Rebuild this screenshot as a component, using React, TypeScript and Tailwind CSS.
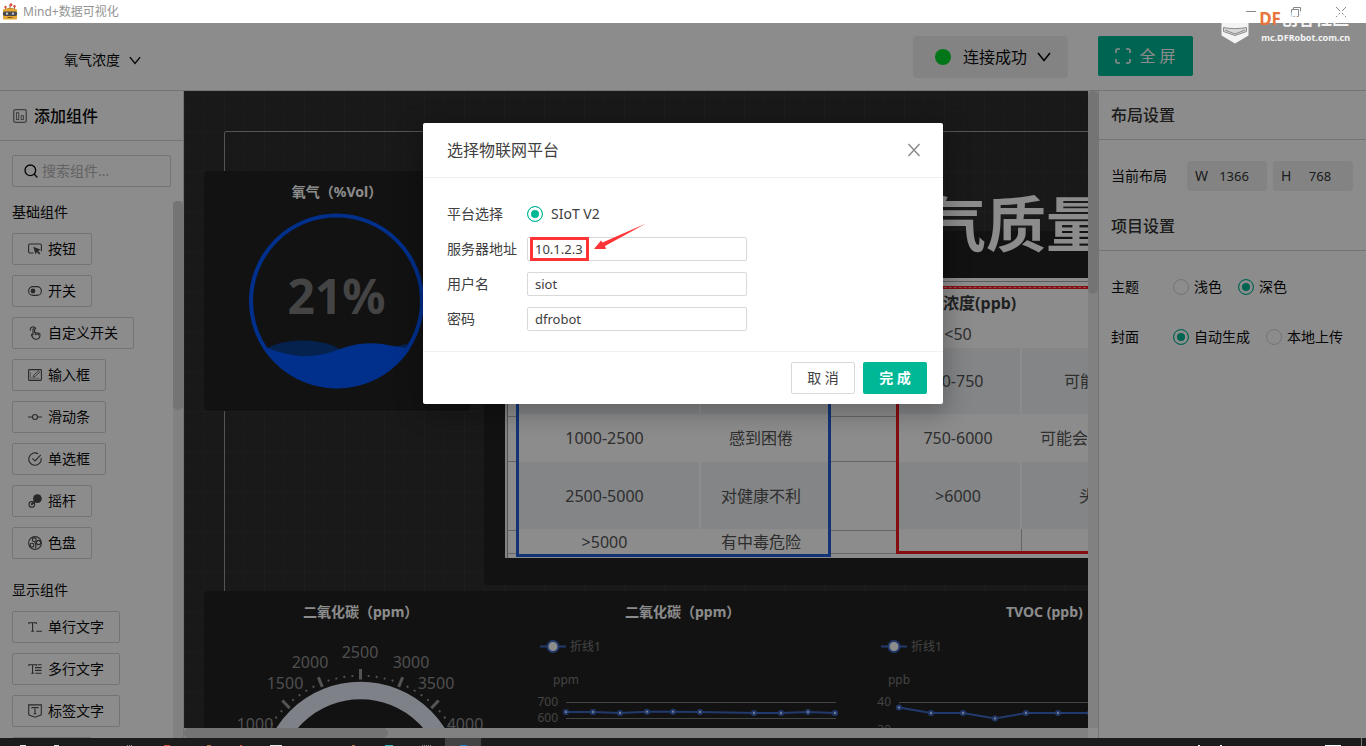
import type { ReactNode } from "react";
import { Search } from "lucide-react";

interface Widget {
  name: string;
  icon: ReactNode;
}

const basicWidgets: Widget[] = [
  {
    name: "按钮",
    icon: (
      <>
        <path d="M5.500 11H1.800a1.200 1.200 0 0 1-1.200-1.200V3.200A1.200 1.200 0 0 1 1.800 2h10.400a1.200 1.200 0 0 1 1.200 1.200v6" />
        <path d="M5.300 4.800l7.600 2.900-2.800 1.300 2.400 2.400-1.400 1.200-2.300-2.500-1.300 2.400z" fill="currentColor" stroke="none" />
      </>
    ),
  },
  {
    name: "开关",
    icon: (
      <>
        <rect x="0.600" y="2.600" width="12.800" height="8.800" rx="4.400" />
        <circle cx="5" cy="7" r="2.400" fill="currentColor" stroke="none" />
      </>
    ),
  },
  {
    name: "自定义开关",
    icon: (
      <>
        <path d="M2.400 4.600A2.800 2.800 0 1 1 7.800 3.200" />
        <path d="M5 9.200V3.600a.8.8 0 0 1 1.600 0V6.600l4.200.6c.8.1 1.200.6 1.200 1.400 0 1.700-.3 4.600-3.200 4.600H7.600C5.800 13.200 4.600 11.600 3.400 9.200c-.3-.8.9-1.300 1.600 0z" />
        <path d="M7.400 7v2M9 7.200v2M10.500 7.300v2" />
      </>
    ),
  },
  {
    name: "输入框",
    icon: (
      <>
        <rect x="0.600" y="1.600" width="12.800" height="10.800" rx="0.800" />
        <path d="M5.200 9l.4-1.800 4.800-4.200 1.200 1.400-4.800 4.200z" strokeWidth="0.8" />
        <path d="M2.400 4v6.200h9" strokeWidth="0.7" opacity="0.7" />
      </>
    ),
  },
  {
    name: "滑动条",
    icon: (
      <>
        <circle cx="7" cy="7" r="2.500" />
        <path d="M0 7h4.500M9.500 7H14" />
      </>
    ),
  },
  {
    name: "单选框",
    icon: (
      <>
        <path d="M10.200 1.800A6.200 6.200 0 1 0 13.100 6" />
        <path d="M4.400 6.400L7 8.900l5.800-6" />
      </>
    ),
  },
  {
    name: "摇杆",
    icon: (
      <>
        <circle cx="9.400" cy="4.600" r="4.400" fill="currentColor" stroke="none" />
        <circle cx="3.800" cy="10.400" r="2.800" />
        <path d="M3.200 10.800L7 7.500" strokeWidth="1.800" />
      </>
    ),
  },
  {
    name: "色盘",
    icon: (
      <>
        <circle cx="7" cy="7" r="6.400" />
        <circle cx="6.200" cy="3.800" r="1.900" />
        <circle cx="10.500" cy="6.500" r="2.100" />
        <circle cx="4" cy="9.200" r="1.900" />
        <path d="M6.800 6.400c1.200 1.400 1.400 3.600.8 6" />
      </>
    ),
  },
];

const displayWidgets: Widget[] = [
  {
    name: "单行文字",
    icon: <path d="M.8 4V2.800h7.600V4M4.600 2.800v8.400M3.200 11.200h2.800M8.200 11.200H14" />,
  },
  {
    name: "多行文字",
    icon: <path d="M.8 4V2.800h7.600V4M4.600 2.800v8.400M3.200 11.200h2.800M9.600 2.800H13.600M7 5.600h6.600M7 8.400h6.600M7.200 11.200h6.400" />,
  },
  {
    name: "标签文字",
    icon: (
      <>
        <path d="M.7.9h12.600v9.300c0 .6-.3.900-.9 1.100L7 13.200l-5.400-1.900c-.6-.2-.9-.5-.9-1.100z" />
        <path d="M4 4.600V3.500h6v1.100M7 3.500v6.300M5.600 9.800h2.800" />
      </>
    ),
  },
  {
    name: "图片",
    icon: <rect x="0.600" y="1.600" width="12.800" height="10.800" rx="1" />,
  },
];

const gaugeLabels = [
  { text: "1000", x: 51, y: 139 },
  { text: "1500", x: 81, y: 98 },
  { text: "2000", x: 106, y: 77 },
  { text: "2500", x: 156, y: 67 },
  { text: "3000", x: 207, y: 77 },
  { text: "3500", x: 232, y: 98 },
  { text: "4000", x: 261, y: 139 },
];

function Chevron({ className }: { className: string }) {
  return (
    <svg viewBox="0 0 14 10" className={className} fill="none" stroke="currentColor" strokeWidth="1.600">
      <path d="M1 1l6 7.500L13 1" />
    </svg>
  );
}

function WidgetSection({ title, widgets }: { title: string; widgets: Widget[] }) {
  return (
    <section className="flex flex-col items-start gap-2.5 mb-5">
      <h3 className="text-sm leading-[22px]">{title}</h3>
      {widgets.map((widget) => (
        <button
          key={widget.name}
          className="h-8 shrink-0 px-[15px] flex items-center gap-1.5 border border-[#d4d4d4] rounded-xs text-sm cursor-pointer"
        >
          <svg viewBox="0 0 14 14" className="w-3.5 h-3.5 text-[#4a4a4a]" fill="none" stroke="currentColor" strokeWidth="1.100">
            {widget.icon}
          </svg>
          {widget.name}
        </button>
      ))}
    </section>
  );
}

function Radio({ name, label, checked = false, gap = "gap-[5px]" }: { name: string; label: string; checked?: boolean; gap?: string }) {
  return (
    <label className={`flex items-center text-sm ${gap}`}>
      <input
        type="radio"
        name={name}
        defaultChecked={checked}
        className="appearance-none w-4 h-4 rounded-full border border-[#d4d4d4] bg-white checked:border-[#00b796] checked:bg-[#00b796] checked:shadow-[inset_0_0_0_3px_white]"
      />
      {label}
    </label>
  );
}

function TitleBar() {
  return (
    <div className="h-[23px] shrink-0 flex items-center justify-between pl-0.5 pr-5 bg-white text-xs text-[#949494]">
      <div className="flex items-center gap-[5px]">
        <svg viewBox="0 0 16 17" className="w-4 h-[17px]">
          <path d="M3.500 7V3.500M8 7V2M12.500 7V3.500" stroke="#8a5a33" />
          <circle cx="3.500" cy="4" r="1.200" fill="#d9503f" />
          <circle cx="9" cy="1.800" r="1.500" fill="#d9503f" />
          <circle cx="12.500" cy="3.200" r="1.200" fill="#d9503f" />
          <path d="M2 6.500c2-2 10-2 12 0z" fill="#c98a2b" />
          <rect x="1" y="6" width="14" height="10.500" rx="1" fill="#e5a733" />
          <rect x="0.800" y="8.500" width="14.400" height="4.500" rx="2" fill="#4a4a50" />
          <circle cx="5" cy="10.700" r="1.100" fill="#c9d3dc" />
          <circle cx="11" cy="10.700" r="1.100" fill="#c9d3dc" />
          <path d="M5.500 14.500h5" stroke="#7a5415" />
        </svg>
        <span>Mind+数据可视化</span>
      </div>
      <div className="flex items-center gap-[35px] text-[#888]">
        <button aria-label="最小化">
          <svg viewBox="0 0 10 10" className="w-2.5 h-2.5" stroke="currentColor"><path d="M0 4.500h10" /></svg>
        </button>
        <button aria-label="还原">
          <svg viewBox="0 0 10 10" className="w-2.5 h-2.5" fill="none" stroke="currentColor">
            <path d="M.5 2.500h7v7h-7zM2.500 2.500v-2h7v7h-2" />
          </svg>
        </button>
        <button aria-label="关闭">
          <svg viewBox="0 0 10 10" className="w-2.5 h-2.5" stroke="currentColor"><path d="M0 0l10 10M10 0L0 10" /></svg>
        </button>
      </div>
    </div>
  );
}

function Header() {
  return (
    <header className="h-[68px] shrink-0 flex items-start justify-between pt-[13px] pl-16 pr-[173px] border-b border-[#d4d4d4]">
      <button className="h-12 flex items-center gap-[9px] text-sm">
        氧气浓度
        <Chevron className="w-3 h-[9px]" />
      </button>
      <div className="flex items-start gap-[30px]">
        <button className="h-[42px] w-[155px] flex items-center pl-[22px] rounded bg-[#efefef] text-base">
          <span className="w-4 h-4 mr-3 rounded-full bg-[#00d72f]" />
          连接成功
          <Chevron className="w-3.5 h-2.5 ml-2.5" />
        </button>
        <button className="h-10 w-[95px] flex items-center justify-center gap-2 rounded-xs bg-[#00b796] text-white text-base">
          <svg viewBox="0 0 16 16" className="w-4 h-4" fill="none" stroke="currentColor" strokeWidth="1.600">
            <path d="M1 5V2.500A1.500 1.500 0 0 1 2.500 1H5M11 1h2.500A1.500 1.500 0 0 1 15 2.500V5M15 11v2.500a1.500 1.500 0 0 1-1.500 1.500H11M5 15H2.500A1.500 1.500 0 0 1 1 13.500V11" />
          </svg>
          全 屏
        </button>
      </div>
    </header>
  );
}

function Sidebar() {
  return (
    <aside className="w-[184px] shrink-0 flex flex-col border-r border-[#d4d4d4]">
      <h2 className="h-[50px] shrink-0 flex items-center gap-[7px] px-[13px] border-b border-[#d4d4d4] text-base font-medium">
        <svg viewBox="0 0 14 14" className="w-3.5 h-3.5 text-[#777]" fill="none" stroke="currentColor" strokeWidth="1.300">
          <rect x="0.700" y="0.700" width="12.600" height="12.600" rx="1.500" />
          <rect x="3.500" y="3.700" width="2.200" height="6.800" strokeWidth="1" />
          <rect x="8.200" y="6.700" width="2.200" height="3.800" strokeWidth="1" />
        </svg>
        添加组件
      </h2>
      <div className="h-8 shrink-0 mx-3 my-3.5 flex items-center gap-[3px] pl-2.5 border border-[#d4d4d4] rounded-xs">
        <Search className="w-4 h-4 shrink-0" strokeWidth={2} />
        <input aria-label="搜索组件" placeholder="搜索组件..." className="w-0 flex-1 text-sm bg-transparent outline-none placeholder:text-[#b5b5b5]" />
      </div>
      <div className="flex-1 min-h-0 flex">
        <div className="flex-1 min-w-0 pl-3 overflow-hidden">
          <WidgetSection title="基础组件" widgets={basicWidgets} />
          <WidgetSection title="显示组件" widgets={displayWidgets} />
        </div>
        <div className="w-2.5 bg-[#ebebeb]">
          <div className="h-[209px] rounded-full bg-[#d3d3d3]" />
        </div>
      </div>
    </aside>
  );
}

function LiquidCard() {
  return (
    <div className="absolute left-5 top-20 w-[266px] h-60 rounded bg-[#222]">
      <h4 className="pt-2.5 text-center text-sm leading-[22px] font-bold text-white">氧气（%Vol）</h4>
      <svg viewBox="0 0 266 200" className="w-full">
        <circle cx="132.500" cy="98" r="85.500" fill="none" stroke="#0057ff" strokeWidth="4" />
        <path
          d="M64 144.500C76 138.500 96 136 112 138.500S130 143 136 146.500C158 150 188 145 204 140.500L202 146A85 85 0 0 1 64 147z"
          fill="#0a3c8c"
        />
        <path
          d="M61 144.500C78 150 92 154 106 153C122 152 132 147 144 143.500C158 139.500 172 139.500 186 142.500L206 145.500A85.500 85.500 0 0 1 61 144.500z"
          fill="#0057ff"
        />
        <text x="132.500" y="111" textAnchor="middle" className="text-5xl font-bold" fill="#7c7c7c">21%</text>
      </svg>
    </div>
  );
}

// co2 cells of the first rows stay blank
const airRows = [
  { h: "h-[29px]", bg: "", co2: "", co2Effect: "", tvoc: "<50", tvocEffect: "", pad: "" },
  { h: "h-[66px]", bg: "bg-[#eff2f5]", co2: "", co2Effect: "", tvoc: "50-750", tvocEffect: "可能", pad: "pl-[42px]" },
  { h: "h-[48px]", bg: "", co2: "1000-2500", co2Effect: "感到困倦", tvoc: "750-6000", tvocEffect: "可能会", pad: "pl-[18px]" },
  { h: "h-[67px]", bg: "bg-[#eff2f5]", co2: "2500-5000", co2Effect: "对健康不利", tvoc: ">6000", tvocEffect: "头", pad: "pl-[57px]" },
  { h: "h-[25px]", bg: "", co2: ">5000", co2Effect: "有中毒危险", tvoc: "", tvocEffect: "", pad: "" },
];

function AirQualityCard() {
  return (
    <>
      <div className="absolute left-[300px] top-[140px] w-[800px] h-[354px] rounded bg-[#222]">
        <div className="absolute left-[21px] top-[47px] w-[760px] h-[280px] overflow-hidden bg-white text-base leading-5 text-[#555] border-l-2 border-[#eee]">
          <div className="absolute inset-x-0 top-[3px] h-px bg-[#aaa]" />
          <div className="absolute inset-x-0 top-[138px] h-px bg-[#bbb]" />
          <div className="absolute inset-x-0 top-[183px] h-px bg-[#bbb]" />
          <div className="absolute inset-x-0 top-[252px] h-px bg-[#bbb]" />
          <div className="absolute inset-x-0 top-[275px] h-px bg-[#bbb]" />
          <div className="absolute inset-y-0 left-0 w-px bg-[#999]" />
          <table className="absolute left-[9px] top-2 w-[315px] table-fixed border-collapse bg-white outline-[3px] -outline-offset-[3px] outline-[#2160d8]">
            <tbody>
              <tr className="h-[33px]"><td className="w-[184px]" /><td /></tr>
              {airRows.map((row) => (
                <tr key={row.tvoc} className={`${row.h} ${row.bg}`}>
                  <td className="p-0 pl-2 pr-3.5 text-center border-r-2 border-white">{row.co2}</td>
                  <td className="p-0 pr-2.5 text-center">{row.co2Effect}</td>
                </tr>
              ))}
              <tr className="h-[3px]"><td className="p-0" /><td className="p-0" /></tr>
            </tbody>
          </table>
          <table className="absolute left-[389px] top-2 w-[400px] table-fixed border-collapse bg-white outline-[3px] -outline-offset-[3px] outline-[#f5181c]">
            <thead>
              <tr className="h-[33px]">
                <th className="w-[125px] p-0 text-center font-bold whitespace-nowrap text-[#3c3c3c]">TVOC浓度(ppb)</th>
                <th />
              </tr>
            </thead>
            <tbody>
              {airRows.map((row) => (
                <tr key={row.tvoc} className={`${row.h} ${row.bg}`}>
                  <td className={`p-0 text-center ${row.tvoc ? "border-r-2 border-white" : "border-r border-[#bbb]"}`}>{row.tvoc}</td>
                  <td className={`p-0 text-left whitespace-nowrap ${row.pad}`}>{row.tvocEffect}</td>
                </tr>
              ))}
            </tbody>
          </table>
          <div className="absolute left-[392px] right-0 top-[9px] border-t border-dashed border-white/50" />
        </div>
      </div>
      <h1 className="absolute left-[742px] top-[98px] text-6xl leading-[70px] font-bold whitespace-nowrap text-white">气质量</h1>
    </>
  );
}

function GaugeChart() {
  const ticks = Array.from({ length: 31 }, (_, i) => i - 15);
  return (
    <svg viewBox="0 0 320 146" className="absolute left-0 top-0 w-80 h-[146px]">
      <circle cx="156.500" cy="190.500" r="91" fill="none" stroke="#e6ebf8" strokeWidth="17.500" />
      {ticks.map((t) =>
        t % 5 === 0 ? (
          <path key={t} d="M156.500 78v10.500" stroke="#999" strokeWidth="3" transform={`rotate(${t * 4.4} 156.500 190.500)`} />
        ) : (
          <circle key={t} cx="156.500" cy="84.700" r="1.100" fill="#999" transform={`rotate(${t * 4.4} 156.500 190.500)`} />
        )
      )}
      {gaugeLabels.map((l) => (
        <text key={l.text} x={l.x} y={l.y} textAnchor="middle" className="text-base" fill="#8f8f8f">{l.text}</text>
      ))}
    </svg>
  );
}

interface LineChartProps {
  unit: string;
  originX: number;
  width: number;
  yLabels: { text: string; y: number }[];
  points: number[][];
}

function LineChart({ unit, originX, width, yLabels, points }: LineChartProps) {
  return (
    <svg viewBox="0 0 320 110" className="w-80 h-[110px] overflow-visible text-xs" fill="#7c7c7c">
      <path d="M0 19.500h26" stroke="#3f68c8" strokeWidth="2" />
      <circle cx="13" cy="19.500" r="5.500" fill="#fff" stroke="#3f68c8" strokeWidth="2" />
      <text x="30" y="24">折线1</text>
      <text x={originX} y="57" textAnchor="middle">{unit}</text>
      {yLabels.map((l) => (
        <g key={l.text}>
          <text x={originX - 8} y={l.y + 3} textAnchor="end">{l.text}</text>
          <path d={`M${originX} ${l.y}h${width}`} stroke="#7c7c7c" />
        </g>
      ))}
      <polyline points={points.map((p) => p.join(",")).join(" ")} fill="none" stroke="#3f68c8" strokeWidth="2" />
      {points.map(([x, y]) => (
        <circle key={x} cx={x} cy={y} r="2" fill="#fff" stroke="#3f68c8" strokeWidth="2" />
      ))}
    </svg>
  );
}

function Canvas() {
  return (
    <main className="flex-1 min-w-0 flex flex-col">
      <div className="flex-1 min-h-0 flex">
        <div className="relative flex-1 min-w-0 overflow-hidden bg-[#2e2e2e] bg-[linear-gradient(#363636_1px,transparent_1px),linear-gradient(90deg,#363636_1px,transparent_1px),linear-gradient(#323232_1px,transparent_1px),linear-gradient(90deg,#323232_1px,transparent_1px)] bg-[size:40px_40px,40px_40px,20px_20px,20px_20px]">
          <div className="absolute left-10 top-10 w-[1366px] h-[768px] rounded-xs border border-[#999]" />
          <LiquidCard />
          <AirQualityCard />
          <div className="absolute left-5 right-0 top-[500px] h-60 rounded-l bg-[#222]">
            <GaugeChart />
            <h4 className="absolute left-[99px] top-2.5 text-sm leading-[22px] font-bold text-white">二氧化碳（ppm）</h4>
            <h4 className="absolute left-[421px] top-2.5 text-sm leading-[22px] font-bold text-white">二氧化碳（ppm）</h4>
            <h4 className="absolute left-[802px] top-2.5 text-sm leading-[22px] font-bold whitespace-nowrap text-white">TVOC (ppb)</h4>
            <div className="absolute left-[336px] top-9">
              <LineChart
                unit="ppm"
                originX={26}
                width={270}
                yLabels={[{ text: "700", y: 75.5 }, { text: "600", y: 91.5 }]}
                points={[[26, 85], [53, 85], [80, 86], [107, 84.7], [133, 84.7], [160, 85], [214, 86], [241, 86], [268, 85], [295, 86]]}
              />
            </div>
            <div className="absolute left-[677px] top-9">
              <LineChart
                unit="ppb"
                originX={18}
                width={290}
                yLabels={[{ text: "40", y: 75.5 }, { text: "30", y: 103.5 }]}
                points={[[18, 80.5], [50, 86], [82, 86], [114, 91.5], [145, 86], [177, 86], [209, 86]]}
              />
            </div>
          </div>
        </div>
        <div className="w-2.5 bg-[#ebebeb]">
          <div className="h-[203px] rounded-full bg-[#d3d3d3]" />
        </div>
      </div>
      <div className="h-2.5 shrink-0 mr-2.5 bg-[#ebebeb]">
        <div className="w-[204px] h-full rounded-full bg-[#d3d3d3]" />
      </div>
    </main>
  );
}

function SizeField({ label, value }: { label: string; value: string }) {
  return (
    <label className="w-20 h-[30px] flex items-center pl-2 rounded bg-[#efefef] text-sm text-[#333]">
      <span className="w-4">{label}</span>
      <input defaultValue={value} className="w-[46px] bg-transparent text-center text-[13px] outline-none" />
    </label>
  );
}

function SettingsPanel() {
  return (
    <aside className="w-[268px] shrink-0 border-l border-[#d4d4d4]">
      <h2 className="h-[49px] px-3 flex items-center border-b border-[#d4d4d4] text-base font-medium text-[#333]">布局设置</h2>
      <div className="flex items-center px-3 pt-[21px] pb-[11px]">
        <span className="w-[76px] text-sm">当前布局</span>
        <div className="flex gap-1.5">
          <SizeField label="W" value="1366" />
          <SizeField label="H" value="768" />
        </div>
      </div>
      <h2 className="h-[49px] px-3 flex items-center border-b border-[#d4d4d4] text-base font-medium text-[#333]">项目设置</h2>
      <div className="pt-[11px] pl-3">
        <div className="h-[50px] flex items-center gap-4">
          <span className="w-[46px] text-sm">主题</span>
          <Radio name="theme" label="浅色" />
          <Radio name="theme" label="深色" checked />
        </div>
        <div className="h-[50px] flex items-center gap-4">
          <span className="w-[46px] text-sm">封面</span>
          <Radio name="cover" label="自动生成" checked />
          <Radio name="cover" label="本地上传" />
        </div>
      </div>
    </aside>
  );
}

function FormRow({ id, label, value }: { id: string; label: string; value: string }) {
  return (
    <div className="relative h-6 flex items-center">
      <label htmlFor={id} className="w-20">{label}</label>
      <input id={id} defaultValue={value} className="w-[220px] h-6 px-[7px] text-[13px] border border-[#d9d9d9] rounded-xs outline-none" />
      {id === "server" && (
        <>
          <span className="absolute left-[83px] top-0 w-[59px] h-6 border-3 border-[#ff3436]" />
          <svg viewBox="0 0 54 28" className="absolute left-[146px] -top-3.5 w-[54px] h-7">
            <path d="M1 26L8 17.500L9.500 19.500L53 0.500L12 23L13 26z" fill="#ff3436" />
          </svg>
        </>
      )}
    </div>
  );
}

function PlatformDialog() {
  return (
    <div
      role="dialog"
      aria-label="选择物联网平台"
      className="w-[520px] h-fit mt-[100px] rounded-xs bg-white text-sm text-[#404040] shadow-[0_6px_24px_4px_rgba(0,0,0,0.25)]"
    >
      <div className="h-[55px] px-6 flex items-center justify-between border-b border-[#f0f0f0]">
        <h2 className="text-base">选择物联网平台</h2>
        <button aria-label="关闭" className="-mr-1 p-0.5 text-[#888]">
          <svg viewBox="0 0 14 14" className="w-3.5 h-3.5" fill="none" stroke="currentColor" strokeWidth="1.400">
            <path d="M1.500 1l11 12M12.500 1l-11 12" />
          </svg>
        </button>
      </div>
      <form className="px-6 pt-6 pb-5 flex flex-col gap-[11px]">
        <div className="h-6 flex items-center">
          <span className="w-20">平台选择</span>
          <Radio name="platform" label="SIoT V2" checked gap="gap-2" />
        </div>
        <FormRow id="server" label="服务器地址" value="10.1.2.3" />
        <FormRow id="user" label="用户名" value="siot" />
        <FormRow id="password" label="密码" value="dfrobot" />
      </form>
      <div className="px-4 py-2.5 flex justify-end gap-2 border-t border-[#f0f0f0]">
        <button className="w-16 h-8 border border-[#d9d9d9] rounded-xs">取 消</button>
        <button className="w-16 h-8 rounded-xs bg-[#00b796] font-bold text-white">完 成</button>
      </div>
    </div>
  );
}

function Watermark() {
  return (
    <div className="absolute right-4 top-2.5 flex items-start gap-2.5 text-white/90">
      <svg viewBox="0 0 28 34" className="w-7 h-[34px]">
        <path d="M.5 4h27v21.500L14 33.500.5 25.500z" fill="#fff" opacity="0.900" />
        <path d="M2.500 17.500c7 1.500 16 1.500 23 0v4L14 25.500 2.500 21.500z" fill="#d8d8d8" stroke="#8c8c8c" />
        <path d="M4 20l10 4 10-4" fill="none" stroke="#8c8c8c" />
      </svg>
      <div>
        <p className="text-[17px] leading-[18px] font-bold whitespace-nowrap">
          <span className="text-[#e8743b]">DF</span>创客社区
        </p>
        <p className="pt-1 pl-0.5 text-[9px] leading-3 font-bold">mc.DFRobot.com.cn</p>
      </div>
    </div>
  );
}

function Taskbar() {
  return (
    <footer className="h-2 shrink-0 flex justify-between bg-[#1c1c1c]">
      <svg viewBox="0 0 490 8" className="w-[490px] h-2">
        <rect x="445" width="36" height="8" fill="#434343" />
        <path d="M20 7.500h6M54 7.500h5M270 7.500h12" stroke="#e5e5e5" />
        <path d="M127 7.500h6M422 7.500h10" stroke="#888" strokeDasharray="1 1" />
        <path d="M164 7.500h6M240 7.500h2" stroke="#d9503f" />
        <path d="M207 7.500h4M352 7.500h3" stroke="#b07840" />
        <path d="M385 7.500h8" stroke="#28b8b8" />
        <path d="M460 7.500h7" stroke="#2e7fc0" />
      </svg>
      <svg viewBox="0 0 180 8" className="w-[180px] h-2">
        <path d="M12 7.500h2M34 7.500h2M139 7.500h16" stroke="#fff" />
        <path d="M175.500 0v8" stroke="#777" />
      </svg>
    </footer>
  );
}

export default function App() {
  return (
    <div className="relative h-screen flex flex-col overflow-hidden bg-white text-[#0a0a0a] font-['Noto_Sans','Noto_Sans_CJK_SC',sans-serif]">
      <TitleBar />
      <div className="relative flex-1 min-h-0 flex flex-col">
        <Header />
        <div className="flex-1 min-h-0 flex">
          <Sidebar />
          <Canvas />
          <SettingsPanel />
        </div>
        <div className="absolute inset-0 flex justify-center bg-black/45">
          <PlatformDialog />
        </div>
      </div>
      <Taskbar />
      <Watermark />
    </div>
  );
}
